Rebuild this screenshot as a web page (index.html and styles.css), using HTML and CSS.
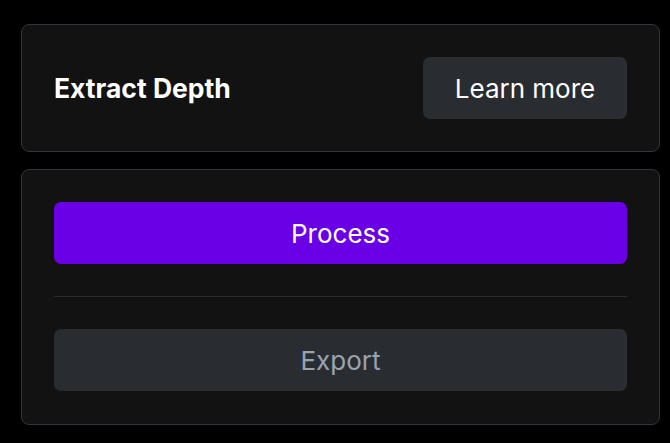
FILE: index.html
```html
<!DOCTYPE html>
<html>
<head>
<meta charset="utf-8">
<link rel="stylesheet" href="styles.css">
</head>
<body>
<div class="page">
  <section class="card header-card">
    <h2 class="title">Extract Depth</h2>
    <button class="btn btn-secondary">Learn more</button>
  </section>
  <section class="card actions-card">
    <button class="btn btn-primary">Process</button>
    <hr class="divider">
    <button class="btn btn-disabled">Export</button>
  </section>
</div>
</body>
</html>
```
FILE: styles.css
```css
html, body {
  margin: 0;
  padding: 0;
  background: #000;
}
body {
  font-family: "Inter", "Noto Sans", sans-serif;
  color: #fff;
}
.page {
  padding: 24px 10px 0 21px;
  display: flex;
  flex-direction: column;
  gap: 17px;
}
.card {
  background: #121212;
  border: 1px solid #37323e;
  border-radius: 8px;
  padding: 32px;
}
.header-card {
  display: flex;
  align-items: center;
  justify-content: space-between;
}
.title {
  margin: 0;
  font-size: 26.5px;
  font-weight: 700;
}
.btn {
  font-family: inherit;
  font-size: 26px;
  height: 62px;
  border: none;
  border-radius: 7px;
  cursor: pointer;
}
.btn-secondary {
  width: 204px;
  background: #292c31;
  color: #fff;
}
.actions-card {
  display: flex;
  flex-direction: column;
  padding-bottom: 33px;
}
.btn-primary {
  width: 100%;
  background: #6a00e6;
  color: #fff;
}
.divider {
  margin: 32px 0;
  border: none;
  border-top: 1px solid #2b2b30;
  height: 0;
}
.btn-disabled {
  width: 100%;
  background: #292c31;
  color: #9aa3b0;
}
```
